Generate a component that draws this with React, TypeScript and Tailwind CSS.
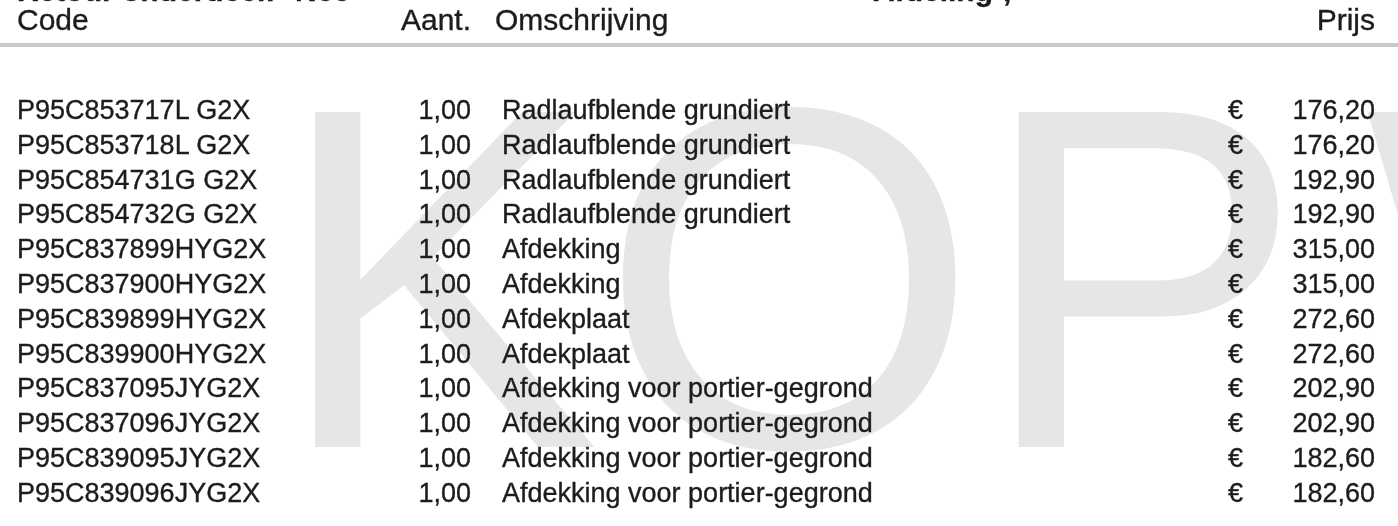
import React from "react";

const rows: [string, string, string][] = [
  ["P95C853717L G2X", "Radlaufblende grundiert", "176,20"],
  ["P95C853718L G2X", "Radlaufblende grundiert", "176,20"],
  ["P95C854731G G2X", "Radlaufblende grundiert", "192,90"],
  ["P95C854732G G2X", "Radlaufblende grundiert", "192,90"],
  ["P95C837899HYG2X", "Afdekking", "315,00"],
  ["P95C837900HYG2X", "Afdekking", "315,00"],
  ["P95C839899HYG2X", "Afdekplaat", "272,60"],
  ["P95C839900HYG2X", "Afdekplaat", "272,60"],
  ["P95C837095JYG2X", "Afdekking voor portier-gegrond", "202,90"],
  ["P95C837096JYG2X", "Afdekking voor portier-gegrond", "202,90"],
  ["P95C839095JYG2X", "Afdekking voor portier-gegrond", "182,60"],
  ["P95C839096JYG2X", "Afdekking voor portier-gegrond", "182,60"],
];

export default function App() {
  return (
    <div className="relative w-[1398px] h-[526px] overflow-hidden bg-white font-['Liberation_Sans',Arial,sans-serif] text-[#1c1c20]">
      {/* watermark */}
      <div className="absolute left-[275px] top-[35px] text-[487px] leading-none text-[#e6e6e6] whitespace-nowrap select-none pointer-events-none">
        KOP<span className="ml-[62px]">W</span>
      </div>

      <div className="relative flex flex-col blur-[0.4px] [-webkit-text-stroke:0.35px_#1c1c20]">
        {/* partially cut top line */}
        <div className="-mt-[24px] h-[30px] leading-[30px] text-[30px] font-bold flex whitespace-nowrap">
          <span className="w-[17px]" />
          <span className="w-[278px]">Retour onderdeel:</span>
          <span className="w-[578px]">Nee</span>
          <span className="w-[130px]">Afdeling</span>
          <span>,</span>
        </div>

        {/* header */}
        <div className="-mt-[1px] h-[30px] leading-[30px] text-[30px] grid grid-cols-[350px_104px_757px_32px_115px] pl-[17px] whitespace-nowrap">
          <span>Code</span>
          <span className="text-right">Aant.</span>
          <span className="pl-[24px]">Omschrijving</span>
          <span />
          <span className="text-right">Prijs</span>
        </div>

        <div className="mt-[8px] h-[4px] bg-[#c9c9c9]" />

        <div className="mt-[46px] flex flex-col">
          {rows.map(([code, desc, price], i) => (
            <div
              key={i}
              className="h-[34.8px] leading-[34.8px] text-[27px] grid grid-cols-[350px_104px_757px_32px_115px] pl-[17px] whitespace-nowrap"
            >
              <span>{code}</span>
              <span className="text-right">1,00</span>
              <span className="pl-[31px]">{desc}</span>
              <span>€</span>
              <span className="text-right">{price}</span>
            </div>
          ))}
        </div>
      </div>
    </div>
  );
}
